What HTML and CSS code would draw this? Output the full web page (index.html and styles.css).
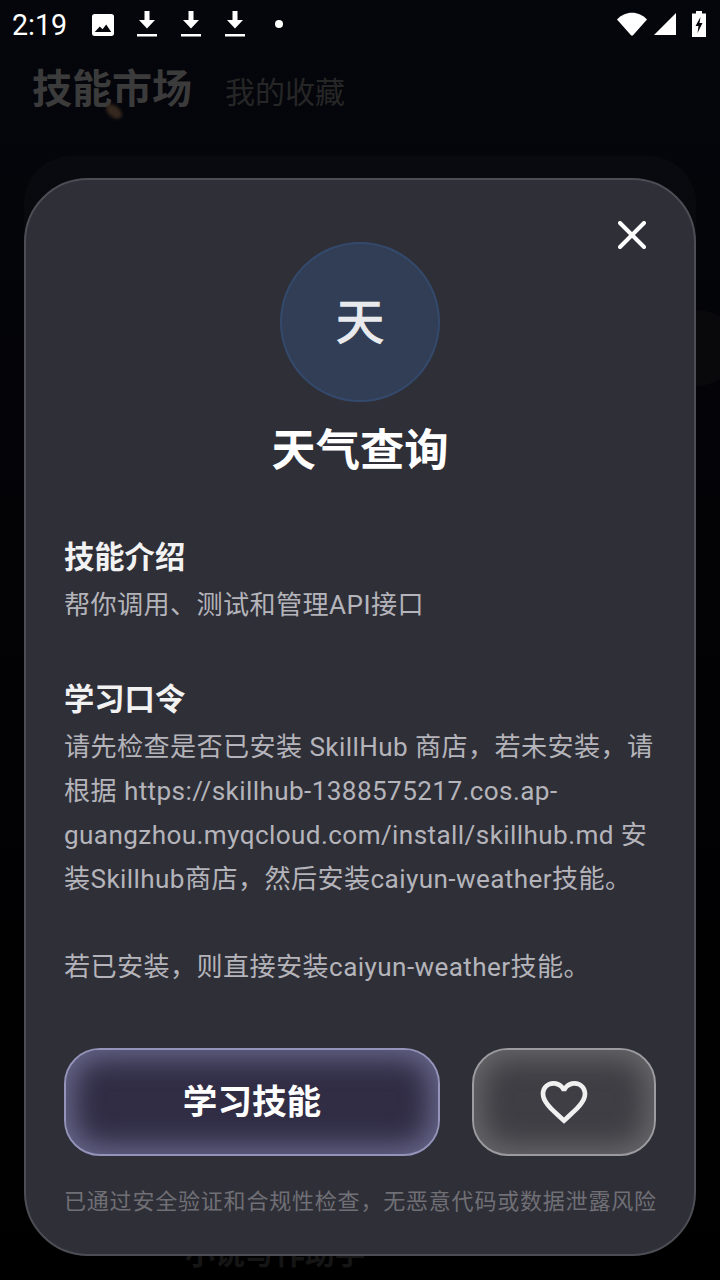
FILE: index.html
```html
<!DOCTYPE html>
<html>

<head>
    <title>技能市场</title>
    <link rel="stylesheet" href="styles.css">
</head>

<body>
    <div class="status-bar">
        <span class="clock">2:19</span>
        <svg class="icon-image" viewBox="0 0 24 24"><path fill-rule="evenodd" d="M3 0H21A3 3 0 0 1 24 3V21A3 3 0 0 1 21 24H3A3 3 0 0 1 0 21V3A3 3 0 0 1 3 0ZM3 19.500H21L15.500 11.500L11.500 16.500L8.500 13.500Z"/></svg>
        <svg class="icon-download" viewBox="0 0 20 26"><path d="M7.500 0H12.500V9H18L10 17.500L2 9H7.500Z"/><rect y="23" width="20" height="2.500"/></svg>
        <svg class="icon-download" viewBox="0 0 20 26"><path d="M7.500 0H12.500V9H18L10 17.500L2 9H7.500Z"/><rect y="23" width="20" height="2.500"/></svg>
        <svg class="icon-download" viewBox="0 0 20 26"><path d="M7.500 0H12.500V9H18L10 17.500L2 9H7.500Z"/><rect y="23" width="20" height="2.500"/></svg>
        <span class="dot"></span>
        <span class="status-right">
            <svg class="icon-wifi" viewBox="0 0 30 24"><path d="M0 7.500C8 -1.500 22 -1.500 30 7.500L16 23.300Q15 24 14 23.300Z"/></svg>
            <svg class="icon-signal" viewBox="0 0 22 22"><path d="M22 0V22H0Z"/></svg>
            <svg class="icon-battery" viewBox="0 0 14 26"><path fill-rule="evenodd" d="M4 0H10V2.500H14V26H0V2.500H4ZM8.500 6L3.500 15H6.500L5.500 22L10.500 12H7.500Z"/></svg>
        </span>
    </div>

    <!-- page behind the dialog -->
    <div class="tabs">
        <span class="tab-active">技能市场</span>
        <span class="tab">我的收藏</span>
    </div>
    <span class="tab-spot"></span>
    <div class="back-card"></div>
    <span class="back-circle"></span>
    <div class="back-name">小说写作助手</div>

    <div class="modal">
        <button class="close-btn">
            <svg viewBox="0 0 28 28"><path d="M2 2L26 26M26 2L2 26"/></svg>
        </button>
        <div class="avatar">天</div>
        <h1 class="skill-name">天气查询</h1>

        <h2 class="section-title">技能介绍</h2>
        <p class="section-text">帮你调用、测试和管理API接口</p>

        <h2 class="section-title learn-title">学习口令</h2>
        <p class="section-text">请先检查是否已安装 SkillHub 商店，若未安装，请根据 https://skillhub-1388575217.cos.ap-guangzhou.myqcloud.com/install/skillhub.md 安装Skillhub商店，然后安装caiyun-weather技能。<br><br>若已安装，则直接安装caiyun-weather技能。</p>

        <div class="actions">
            <button class="learn-btn">学习技能</button>
            <button class="fav-btn">
                <svg viewBox="0 0 24 24"><path d="M16.500 3c-1.740 0-3.410.810-4.500 2.090C10.910 3.810 9.240 3 7.500 3 4.420 3 2 5.420 2 8.500c0 3.780 3.400 6.860 8.550 11.540L12 21.350l1.450-1.320C18.600 15.360 22 12.280 22 8.500 22 5.420 19.580 3 16.500 3zm-4.400 15.550l-.1.100-.1-.100C7.140 14.240 4 11.390 4 8.500 4 6.500 5.500 5 7.500 5c1.540 0 3.040.990 3.570 2.360h1.870C13.460 5.990 14.960 5 16.500 5c2 0 3.500 1.500 3.500 3.500 0 2.890-3.140 5.740-7.900 10.050z"/></svg>
            </button>
        </div>
        <p class="safe-note">已通过安全验证和合规性检查，无恶意代码或数据泄露风险</p>
    </div>
</body>

</html>
```
FILE: styles.css
```css
/* General Styles */
* {
    box-sizing: border-box;
}

html,
body {
    margin: 0;
    height: 1280px;
    overflow: hidden;
}

body {
    position: relative;
    background: linear-gradient(180deg, #05060c 0%, #030306 40%, #000 100%);
    font-family: Roboto, "Noto Sans CJK SC", sans-serif;
}

/* Status Bar */
.status-bar {
    display: flex;
    align-items: center;
    height: 48px;
    padding: 0 14px 0 12px;
    fill: #fff;
}

.clock {
    width: 80px;
    padding-top: 2px;
    color: #fff;
    font-size: 28.6px;
}

.icon-image {
    width: 22px;
    height: 22px;
    margin-top: 1px;
}

.icon-download {
    width: 20px;
    height: 26px;
    margin-left: 24px;
}

.icon-image + .icon-download {
    margin-left: 23px;
}

.dot {
    width: 8px;
    height: 8px;
    margin-left: 30px;
    border-radius: 50%;
    background-color: #fff;
}

.status-right {
    display: flex;
    align-items: center;
    margin-left: auto;
}

.icon-wifi {
    width: 30px;
    height: 24px;
}

.icon-signal {
    width: 22px;
    height: 22px;
    margin-left: 7px;
}

.icon-battery {
    width: 14px;
    height: 26px;
    margin-left: 16px;
}

/* Page Behind */
.tabs {
    display: flex;
    align-items: center;
    gap: 33px;
    padding: 18px 0 0 32px;
}

.tab-active {
    color: #3b3b3b;
    font-size: 40px;
    font-weight: 700;
    line-height: 48px;
}

.tab {
    color: #262626;
    font-size: 30px;
}

.tab-spot {
    position: absolute;
    left: 105px;
    top: 106px;
    width: 18px;
    height: 11px;
    border-radius: 50%;
    background-color: #35281e;
    filter: blur(1.500px);
    transform: rotate(40deg);
}

.back-card {
    position: absolute;
    left: 24px;
    top: 156px;
    width: 672px;
    height: 400px;
    border-radius: 48px;
    background: linear-gradient(180deg, #090a0f, #050507);
}

.back-circle {
    position: absolute;
    left: 660px;
    top: 310px;
    width: 76px;
    height: 76px;
    border-radius: 50%;
    background-color: #09090b;
}

.back-name {
    position: absolute;
    left: 185px;
    top: 1229px;
    color: #151515;
    font-size: 30px;
    font-weight: 700;
}

/* Dialog */
.modal {
    position: absolute;
    left: 24px;
    top: 178px;
    width: 672px;
    height: 1078px;
    padding: 62px 38px 0;
    border: 2px solid #4d4d55;
    border-radius: 64px;
    background-color: #2f2f38;
}

.close-btn {
    position: absolute;
    right: 46px;
    top: 39px;
    width: 32px;
    height: 32px;
    padding: 2px;
    border: none;
    background: none;
}

.close-btn svg {
    display: block;
    fill: none;
    stroke: #fff;
    stroke-width: 4;
    stroke-linecap: round;
}

.avatar {
    display: flex;
    align-items: center;
    justify-content: center;
    width: 160px;
    height: 160px;
    margin: 0 auto;
    padding-bottom: 8px;
    border: 2px solid #344a6d;
    border-radius: 50%;
    background-color: #323e55;
    color: #e8eaed;
    font-size: 48px;
    -webkit-text-stroke: 1.4px #e8eaed;
}

.skill-name {
    margin: 19px 0 0;
    color: #fff;
    font-size: 44.3px;
    font-weight: 700;
    line-height: 60px;
    text-align: center;
}

.section-title {
    margin: 55px 0 0;
    color: #f2f2f2;
    font-size: 30.3px;
    font-weight: 700;
    line-height: 44px;
}

.learn-title {
    margin-top: 51px;
}

.section-text {
    margin: 3px 0 0;
    color: #b4b4ba;
    font-size: 26.12px;
    letter-spacing: 0.4px;
    line-height: 44px;
}

/* Buttons */
.actions {
    display: flex;
    gap: 32px;
    margin-top: 59px;
}

.learn-btn,
.fav-btn {
    height: 108px;
    border-radius: 36px;
}

.learn-btn {
    flex: 1;
    padding-bottom: 8px;
    border: 2px solid #9494ba;
    background-color: #312d45;
    box-shadow: inset 0 0 28px 8px #68688c;
    color: #fff;
    font-family: inherit;
    font-size: 34.6px;
    font-weight: 700;
}

.fav-btn {
    width: 184px;
    border: 2px solid #9c9ca0;
    background-color: #3e3e44;
    box-shadow: inset 0 0 28px 8px #68686c;
}

.fav-btn svg {
    display: block;
    width: 56px;
    height: 56px;
    margin: 0 auto;
    fill: #f0f0f0;
}

.safe-note {
    margin: 30px 0 0;
    color: #6f6f75;
    font-size: 22px;
    letter-spacing: 0.8px;
    line-height: 32px;
    white-space: nowrap;
}
```
